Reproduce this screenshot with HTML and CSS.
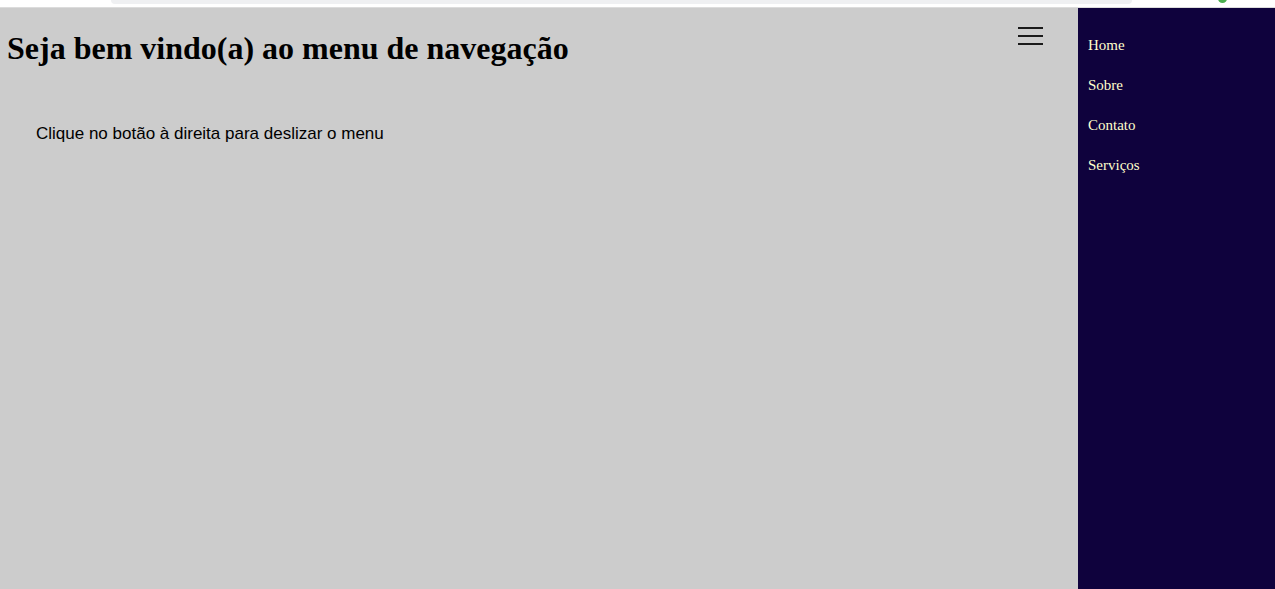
FILE: index.html
```html
<!DOCTYPE html>
<html lang="pt-BR">
<head>
<meta charset="utf-8">
<title>Menu de navegação</title>
<link rel="stylesheet" href="styles.css">
</head>
<body>
<div class="chrome">
  <div class="chrome-bar"></div>
  <div class="chrome-dot"></div>
</div>
<div class="page">
  <main class="content">
    <header class="top">
      <h1 class="title">Seja bem vindo(a) ao menu de navegação</h1>
      <button class="burger" aria-label="Menu">
        <span></span><span></span><span></span>
      </button>
    </header>
    <p class="hint">Clique no botão à direita para deslizar o menu</p>
  </main>
  <nav class="sidebar">
    <ul class="menu">
      <li><a href="#">Home</a></li>
      <li><a href="#">Sobre</a></li>
      <li><a href="#">Contato</a></li>
      <li><a href="#">Serviços</a></li>
    </ul>
  </nav>
</div>
</body>
</html>
```

FILE: styles.css
```css
html, body {
  margin: 0;
  padding: 0;
  height: 100%;
}
body {
  display: flex;
  flex-direction: column;
  background: #ffffff;
  overflow: hidden;
}
.chrome {
  height: 7px;
  border-bottom: 1px solid #dcdcdc;
  background: #ffffff;
  position: relative;
  flex: none;
}
.chrome-bar {
  position: absolute;
  left: 111px;
  width: 1021px;
  top: 0;
  height: 4px;
  background: #eff0f2;
  border-radius: 0 0 4px 4px;
}
.chrome-dot {
  position: absolute;
  left: 1218px;
  top: -6px;
  width: 9px;
  height: 9px;
  border-radius: 50%;
  background: #4caf50;
}
.page {
  flex: 1;
  display: flex;
  min-height: 0;
}
.content {
  flex: 1;
  background: #cccccc;
}
.top {
  display: flex;
  justify-content: space-between;
  align-items: flex-start;
}
.title {
  margin: 22px 0 0 7px;
  font-family: "Liberation Serif", "Times New Roman", serif;
  font-size: 32px;
  line-height: 37px;
  font-weight: bold;
  color: #000;
}
.burger {
  margin: 19px 35px 0 0;
  padding: 0;
  border: 0;
  background: transparent;
  display: flex;
  flex-direction: column;
  gap: 6px;
  width: 25px;
  cursor: pointer;
}
.burger span {
  display: block;
  height: 2px;
  width: 25px;
  background: #1a1a1a;
}
.hint {
  margin: 57px 0 0 36px;
  font-family: "Liberation Sans", Arial, sans-serif;
  font-size: 17px;
  line-height: 20px;
  color: #000;
}
.sidebar {
  width: 197px;
  flex: none;
  background: #0f023d;
}
.menu {
  list-style: none;
  margin: 0;
  padding: 17px 0 0 10px;
}
.menu li {
  line-height: 40px;
}
.menu a {
  font-family: "Liberation Serif", "Times New Roman", serif;
  font-size: 15px;
  color: #ffffcc;
  text-decoration: none;
}
```
